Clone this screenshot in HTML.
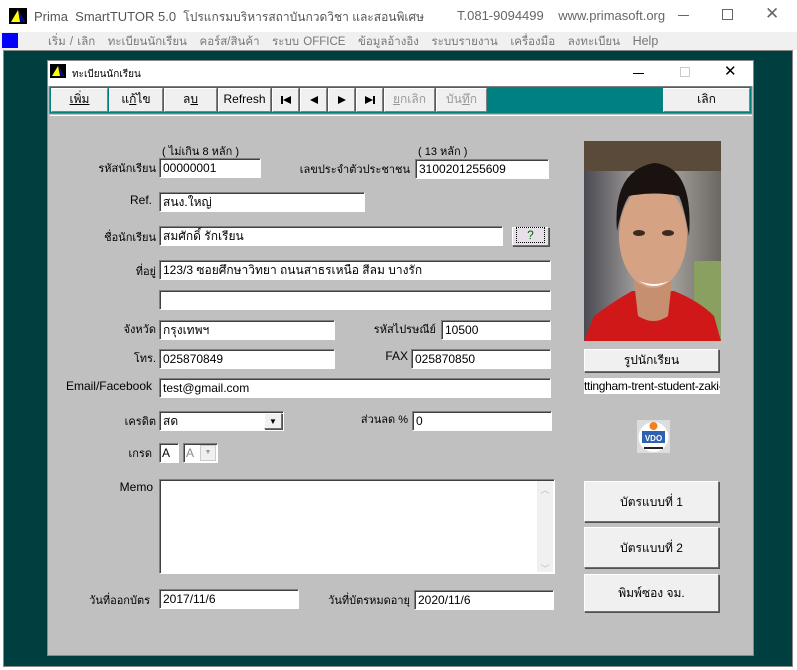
<!DOCTYPE html>
<html><head><meta charset="utf-8"><style>
*{box-sizing:border-box;margin:0;padding:0}
body{width:797px;height:670px;background:#fff;font-family:"Liberation Sans",sans-serif;font-size:12px;color:#000;position:relative;overflow:hidden}
.a{position:absolute}
.in{position:absolute;background:#fff;border:1px solid;border-color:#808080 #fff #fff #808080;box-shadow:inset 1px 1px 0 #404040;padding:2px 3px;font-size:12px;white-space:nowrap;overflow:hidden;height:20px;line-height:15px}
.lb{position:absolute;font-size:11px;white-space:nowrap;text-align:right}
.tb{position:absolute;top:88px;height:24px;background:#f0f0f0;border:1px solid;border-color:#fff #808080 #808080 #fff;text-align:center;line-height:21px;font-size:12px}
.btn{position:absolute;background:#f0f0f0;border:1px solid;border-color:#fff #707070 #707070 #fff;box-shadow:1px 1px 0 #505050;text-align:center;font-size:12px}
</style></head><body>
<div class="a" style="left:0;top:0;width:797px;height:32px;background:#fff"></div>
<svg class="a" style="left:9px;top:8px" width="18" height="16"><rect width="18" height="16" fill="#000"/><polygon points="9,2 16,14 2,14" fill="#ffff00"/><polygon points="9,2 16,14 11,14" fill="#0000a0"/></svg>
<div class="a" style="left:34px;top:8px;font-size:13px;color:#555;white-space:nowrap">Prima&nbsp; SmartTUTOR 5.0&nbsp; <span style="font-size:12px">โปรแกรมบริหารสถาบันกวดวิชา และสอนพิเศษ</span></div>
<div class="a" style="left:457px;top:8px;font-size:13px;color:#666">T.081-9094499&nbsp;&nbsp;&nbsp; www.primasoft.org</div>
<div class="a" style="left:678px;top:15px;width:11px;height:1px;background:#666"></div>
<div class="a" style="left:722px;top:9px;width:11px;height:11px;border:1px solid #666"></div>
<div class="a" style="left:765px;top:4px;font-size:17px;color:#666">✕</div>
<div class="a" style="left:0;top:32px;width:797px;height:18px;background:#f0f0f0"></div>
<div class="a" style="left:2px;top:33px;width:16px;height:15px;background:#0000ff"></div>
<div class="a" style="left:48px;top:33px;font-size:11.5px;color:#777;word-spacing:1px;white-space:nowrap">เริ่ม / เลิก&nbsp;&nbsp; ทะเบียนนักเรียน&nbsp;&nbsp; คอร์ส/สินค้า&nbsp;&nbsp; ระบบ OFFICE&nbsp;&nbsp; ข้อมูลอ้างอิง&nbsp;&nbsp; ระบบรายงาน&nbsp;&nbsp; เครื่องมือ&nbsp;&nbsp; ลงทะเบียน&nbsp;&nbsp; <span style="font-size:12.5px">Help</span></div>
<div class="a" style="left:3px;top:50px;width:790px;height:617px;background:#003f3f;border:1px solid #888"></div>
<div class="a" style="left:47px;top:60px;width:707px;height:596px;background:#c0c0c0;border:1px solid #888"></div>
<div class="a" style="left:48px;top:61px;width:705px;height:25px;background:#fff"></div>
<svg class="a" style="left:50px;top:64px" width="16" height="14"><rect width="16" height="14" fill="#000"/><polygon points="8,2 14,12 2,12" fill="#ffff00"/><polygon points="8,2 14,12 10,12" fill="#0000a0"/></svg>
<div class="a" style="left:72px;top:67px;font-size:10px">ทะเบียนนักเรียน</div>
<div class="a" style="left:633px;top:73px;width:11px;height:1px;background:#000"></div>
<div class="a" style="left:680px;top:67px;width:10px;height:10px;border:1px solid #ccc"></div>
<div class="a" style="left:724px;top:62px;font-size:15px">✕</div>
<div class="a" style="left:49px;top:86px;width:703px;height:28px;background:#008080;border:1px solid #808080"></div>
<div class="tb" style="left:51px;width:57px"><u>เพิ่ม</u></div>
<div class="tb" style="left:109px;width:54px">แ<u>ก้</u>ไข</div>
<div class="tb" style="left:164px;width:53px">ล<u>บ</u></div>
<div class="tb" style="left:218px;width:53px">Refresh</div>
<div class="tb" style="left:272px;width:27px"><svg width="12" height="10" style="margin-top:6px"><rect x="1" y="1" width="2" height="8"/><polygon points="3,5 11,1 11,9"/></svg></div>
<div class="tb" style="left:300px;width:27px"><svg width="10" height="10" style="margin-top:6px"><polygon points="1,5 9,1 9,9"/></svg></div>
<div class="tb" style="left:328px;width:27px"><svg width="10" height="10" style="margin-top:6px"><polygon points="9,5 1,1 1,9"/></svg></div>
<div class="tb" style="left:356px;width:27px"><svg width="12" height="10" style="margin-top:6px"><rect x="9" y="1" width="2" height="8"/><polygon points="9,5 1,1 1,9"/></svg></div>
<div class="tb" style="left:384px;width:51px;color:#999"><u>ย</u>กเลิก</div>
<div class="tb" style="left:436px;width:51px;color:#999">บัน<u>ทึ</u>ก</div>
<div class="tb" style="left:663px;width:87px">เลิก</div>
<div class="a" style="left:50px;top:115px;width:702px;height:2px;border-top:1px solid #fff"></div>
<div class="lb" style="left:162px;top:142px">( ไม่เกิน 8 หลัก )</div>
<div class="lb" style="left:418px;top:142px">( 13 หลัก )</div>
<div class="lb" style="left:60px;top:159px;width:96px">รหัสนักเรียน</div>
<div class="in" style="left:159px;top:158px;width:102px">00000001</div>
<div class="lb" style="left:290px;top:160px;width:120px">เลขประจำตัวประชาชน</div>
<div class="in" style="left:415px;top:159px;width:134px">3100201255609</div>
<div class="lb" style="left:60px;top:193px;width:92px;font-size:12px">Ref.</div>
<div class="in" style="left:159px;top:192px;width:206px">สนง.ใหญ่</div>
<div class="lb" style="left:60px;top:228px;width:96px">ชื่อนักเรียน</div>
<div class="in" style="left:159px;top:226px;width:344px">สมศักดิ์ รักเรียน</div>
<div class="btn" style="left:512px;top:227px;width:37px;height:19px;line-height:15px;background:#e8e0e8"><span style="border:1px dotted #000;padding:0 10px;color:#060">?</span></div>
<div class="lb" style="left:60px;top:262px;width:96px">ที่อยู่</div>
<div class="in" style="left:159px;top:260px;width:392px">123/3 ซอยศึกษาวิทยา ถนนสาธรเหนือ สีลม บางรัก</div>
<div class="in" style="left:159px;top:290px;width:392px"></div>
<div class="lb" style="left:60px;top:320px;width:96px">จังหวัด</div>
<div class="in" style="left:159px;top:320px;width:176px">กรุงเทพฯ</div>
<div class="lb" style="left:340px;top:320px;width:96px">รหัสไปรษณีย์</div>
<div class="in" style="left:441px;top:320px;width:110px">10500</div>
<div class="lb" style="left:60px;top:349px;width:96px">โทร.</div>
<div class="in" style="left:159px;top:349px;width:176px">025870849</div>
<div class="lb" style="left:340px;top:349px;width:68px;font-size:12px">FAX</div>
<div class="in" style="left:411px;top:349px;width:140px">025870850</div>
<div class="lb" style="left:60px;top:379px;width:92px;font-size:12px">Email/Facebook</div>
<div class="in" style="left:159px;top:378px;width:392px">test@gmail.com</div>
<div class="lb" style="left:60px;top:412px;width:96px">เครดิต</div>
<div class="in" style="left:159px;top:411px;width:125px">สด</div>
<div class="btn" style="left:264px;top:413px;width:18px;height:16px;font-size:8px;line-height:15px">▼</div>
<div class="lb" style="left:320px;top:410px;width:88px">ส่วนลด %</div>
<div class="in" style="left:412px;top:411px;width:140px">0</div>
<div class="lb" style="left:60px;top:444px;width:92px">เกรด</div>
<div class="in" style="left:159px;top:443px;width:20px;padding-left:2px">A</div>
<div class="in" style="left:183px;top:443px;width:35px;padding-left:2px;color:#888">A</div>
<div class="a" style="left:200px;top:445px;width:16px;height:16px;background:#f0f0f0;border:1px solid #ccc;font-size:7px;color:#999;text-align:center;line-height:14px">▼</div>
<div class="lb" style="left:60px;top:480px;width:93px;font-size:12px">Memo</div>
<div class="in" style="left:159px;top:479px;width:396px;height:95px"></div>
<div class="a" style="left:537px;top:481px;width:16px;height:91px;background:#f0f0f0;color:#bbb;font-size:9px;text-align:center"><div style="margin-top:2px">︿</div><div style="margin-top:66px">﹀</div></div>
<div class="lb" style="left:60px;top:591px;width:90px">วันที่ออกบัตร</div>
<div class="in" style="left:159px;top:589px;width:140px">2017/11/6</div>
<div class="lb" style="left:310px;top:591px;width:100px">วันที่บัตรหมดอายุ</div>
<div class="in" style="left:414px;top:590px;width:140px">2020/11/6</div>
<svg class="a" style="left:584px;top:141px" width="137" height="200">
<defs><linearGradient id="bg" x1="0" y1="0" x2="1" y2="0"><stop offset="0" stop-color="#4a4a52"/><stop offset=".5" stop-color="#b8b4b0"/><stop offset="1" stop-color="#6a6660"/></linearGradient></defs>
<rect width="137" height="200" fill="url(#bg)"/>
<rect width="137" height="30" fill="#5a4a3a"/>
<rect x="110" y="120" width="27" height="80" fill="#8aa060"/>
<path d="M0 200 L10 175 Q30 160 48 150 L90 150 Q115 160 130 175 L137 200Z" fill="#d01818"/>
<path d="M50 140 L88 140 L84 175 Q70 185 54 175Z" fill="#c69070"/>
<ellipse cx="69" cy="95" rx="34" ry="52" fill="#d6a284"/>
<path d="M33 90 Q28 30 70 22 Q110 25 105 95 Q100 65 95 55 Q70 50 45 55 Q38 65 33 90Z" fill="#1a1210"/>
<ellipse cx="55" cy="92" rx="6" ry="3" fill="#3a2a20"/><ellipse cx="84" cy="92" rx="6" ry="3" fill="#3a2a20"/>
<path d="M55 140 Q70 150 85 140 Q70 146 55 140Z" fill="#fff"/>
</svg>
<div class="btn" style="left:584px;top:349px;width:135px;height:23px;line-height:20px">รูปนักเรียน</div>
<div class="a" style="left:584px;top:378px;width:136px;height:16px;background:#fff;font-size:12px;line-height:16px;white-space:nowrap;overflow:hidden;letter-spacing:-0.3px">ttingham-trent-student-zaki-1.j</div>
<svg class="a" style="left:637px;top:420px" width="33" height="33"><rect width="33" height="33" fill="#ddd"/><circle cx="16.5" cy="17" r="15" fill="#fff"/><circle cx="16.5" cy="6" r="4" fill="#f08020"/><rect x="5" y="11" width="23" height="12" fill="#3060b0"/><text x="16.5" y="21" font-size="8" font-weight="bold" fill="#fff" text-anchor="middle" font-family="Liberation Sans">VDO</text><rect x="7" y="27" width="19" height="2" fill="#222"/></svg>
<div class="btn" style="left:584px;top:481px;width:135px;height:41px;line-height:40px">บัตรแบบที่ 1</div>
<div class="btn" style="left:584px;top:527px;width:135px;height:41px;line-height:40px">บัตรแบบที่ 2</div>
<div class="btn" style="left:584px;top:574px;width:135px;height:38px;line-height:37px">พิมพ์ซอง จม.</div>
</body></html>
